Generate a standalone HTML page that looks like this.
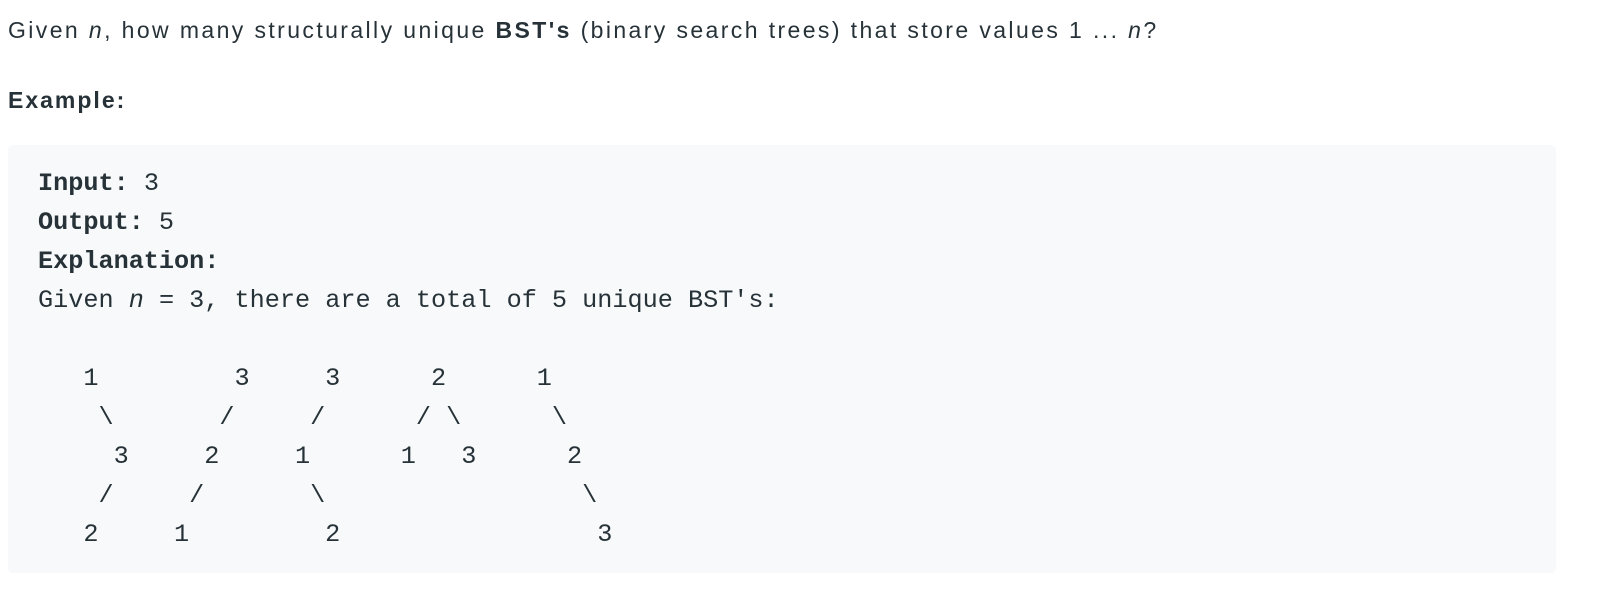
<!DOCTYPE html>
<html><head><meta charset="utf-8"><style>
html,body{margin:0;padding:0;background:#fff;width:1608px;height:610px;overflow:hidden}
body{font-family:"Liberation Sans",sans-serif;color:#263238;}
p{margin:0;position:absolute;left:8px;font-size:23px;line-height:30px;letter-spacing:2.4px}
pre{position:absolute;left:8px;top:145px;width:1488px;margin:0;padding:19px 30px 19px 30px;background:#f7f9fa;border-radius:5px;font-family:"Liberation Mono",monospace;font-size:25.2px;line-height:39px;color:#263238;height:390px}
</style></head><body>
<p style="top:15px">Given <i>n</i>, how many structurally unique <b>BST's</b> (binary search trees) that store values 1 ... <i>n</i>?</p>
<p style="top:85px;font-weight:bold;letter-spacing:2px">Example:</p>
<pre><b>Input:</b> 3
<b>Output:</b> 5
<b>Explanation:
</b>Given <i>n</i> = 3, there are a total of 5 unique BST's:

   1         3     3      2      1
    \       /     /      / \      \
     3     2     1      1   3      2
    /     /       \                 \
   2     1         2                 3</pre>
</body></html>
